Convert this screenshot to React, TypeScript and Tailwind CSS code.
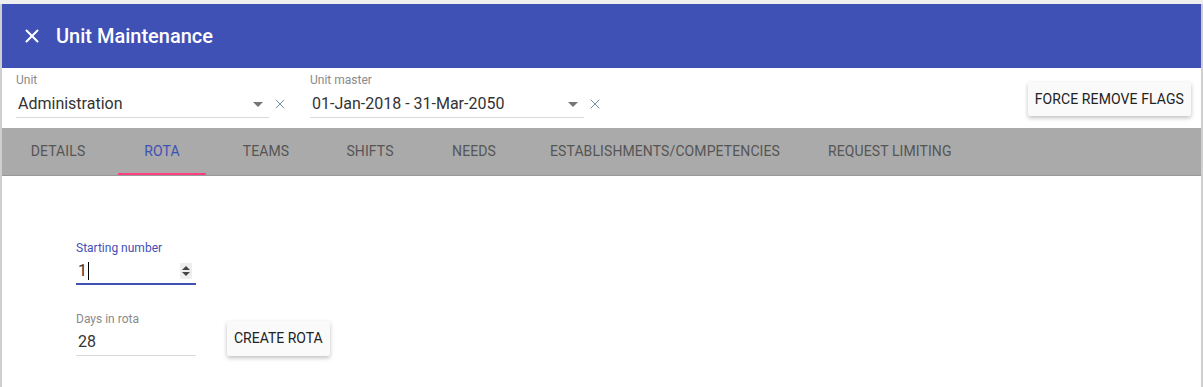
import { X } from "lucide-react";

const tabs = ["DETAILS", "ROTA", "TEAMS", "SHIFTS", "NEEDS", "ESTABLISHMENTS/COMPETENCIES", "REQUEST LIMITING"];

function Caret() {
  return (
    <svg width="10" height="5" viewBox="0 0 10 5" className="shrink-0">
      <path d="M0 0 L10 0 L5 5 Z" fill="#757575" />
    </svg>
  );
}

function SelectField({ label, value, width }: { label: string; value: string; width: string }) {
  return (
    <div className="flex items-end">
      <div className={`${width} flex flex-col`}>
        <span className="text-[12px] leading-[14px] text-[#8a8a8a]">{label}</span>
        <div className="flex items-center justify-between h-[31px] pt-[4px] border-b border-[#d9d9d9] pl-[2px] pr-[6px]">
          <span className="text-[16px] text-[#333]">{value}</span>
          <Caret />
        </div>
      </div>
      <X size={16} strokeWidth={1.4} className="text-[#6b85a0] ml-[3px] mb-[6px]" />
    </div>
  );
}

export default function App() {
  return (
    <div className="w-[1203px] h-[387px] bg-[#efefef] pt-[4px] font-['Roboto',sans-serif] overflow-hidden">
      <div className="h-full border-l-2 border-r-2 border-[#cfcfcf] bg-white">
        {/* Header */}
        <div className="h-[64px] bg-[#3f51b5] flex items-center pl-[19px] text-white">
          <X size={22} strokeWidth={2.2} />
          <span className="ml-[13px] text-[20px] font-medium">Unit Maintenance</span>
        </div>

        {/* Filters */}
        <div className="h-[60px] flex items-start pl-[14px] pr-[10px] pt-[5px]">
          <SelectField label="Unit" value="Administration" width="w-[253px]" />
          <div className="ml-[22px]">
            <SelectField label="Unit master" value="01-Jan-2018 - 31-Mar-2050" width="w-[274px]" />
          </div>
          <button className="ml-auto mt-[9px] h-[34px] px-[7px] rounded-[2px] bg-[#fafafa] text-[14px] text-[#222] tracking-[0.1px] shadow-[0_2px_4px_rgba(0,0,0,0.25)]">
            FORCE REMOVE FLAGS
          </button>
        </div>

        {/* Tabs */}
        <div className="h-[48px] bg-[#aaaaaa] border-b border-[#999] flex pl-[4px]">
          {tabs.map((t) => (
            <div
              key={t}
              className={`relative min-w-[104px] px-[24px] flex items-center justify-center text-[14px] tracking-[0.1px] ${t === "ROTA" ? "text-[#3f51b5]" : "text-[#555]"}`}
            >
              {t}
              {t === "ROTA" && <div className="absolute left-[8px] right-[8px] bottom-0 h-[2px] bg-[#ff4081]" />}
            </div>
          ))}
        </div>

        {/* Content */}
        <div className="pl-[74px] pt-[65px]">
          <div className="w-[120px] flex flex-col">
            <span className="text-[12px] leading-[14px] text-[#3f51b5]">Starting number</span>
            <div className="flex items-center justify-between h-[30px] pt-[3px] border-b-2 border-[#3f51b5] pl-[2px] pr-[4px]">
              <span className="text-[16px] text-[#333] flex items-center">
                1<span className="inline-block w-[1px] h-[18px] bg-black ml-[1px]" />
              </span>
              <div className="w-[12px] h-[16px] bg-[#eee] flex flex-col items-center justify-center gap-[2px]">
                <svg width="8" height="4" viewBox="0 0 8 4"><path d="M0 4 L8 4 L4 0 Z" fill="#444" /></svg>
                <svg width="8" height="4" viewBox="0 0 8 4"><path d="M0 0 L8 0 L4 4 Z" fill="#444" /></svg>
              </div>
            </div>
          </div>

          <div className="flex items-end mt-[27px]">
            <div className="w-[120px] flex flex-col">
              <span className="text-[12px] leading-[14px] text-[#8a8a8a]">Days in rota</span>
              <div className="flex items-center h-[30px] pt-[3px] border-b border-[#d9d9d9] pl-[2px]">
                <span className="text-[16px] text-[#333]">28</span>
              </div>
            </div>
            <button className="ml-[31px] mb-0 h-[35px] px-[7px] rounded-[2px] bg-[#fafafa] text-[14px] text-[#222] shadow-[0_2px_4px_rgba(0,0,0,0.25)]">
              CREATE ROTA
            </button>
          </div>
        </div>
      </div>
    </div>
  );
}
